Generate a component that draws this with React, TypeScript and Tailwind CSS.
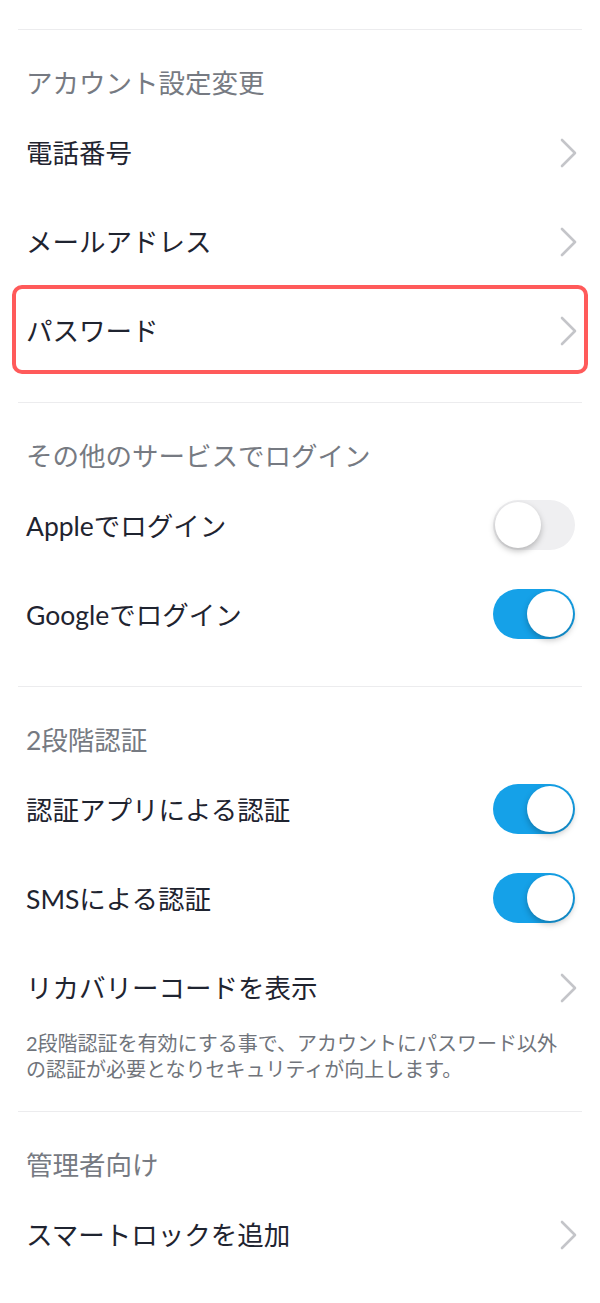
type Row =
  | { label: string; kind: "link"; highlight?: boolean }
  | { label: string; kind: "toggle"; on: boolean };

const Chevron = () => (
  <svg width="18" height="30" viewBox="0 0 18 30" fill="none" className="text-[#c4c5c9]">
    <polyline points="2,2 15,15 2,28" stroke="currentColor" strokeWidth="2.6" strokeLinecap="round" strokeLinejoin="round" />
  </svg>
);

const Toggle = ({ on }: { on: boolean }) => (
  <div
    className={`relative w-[82px] h-[50px] rounded-full ${on ? "bg-[#15a1e8]" : "bg-[#efeff1]"}`}
  >
    <div
      className={`absolute top-[2px] w-[46px] h-[46px] rounded-full bg-white shadow-[0_3px_6px_rgba(0,0,0,0.25)] ${
        on ? "right-[2px]" : "left-[2px]"
      }`}
    />
  </div>
);

const SettingRow = ({ row }: { row: Row }) => (
  <div className="relative h-[89px] flex items-center justify-between pl-2 pr-[4px]">
    <span className="text-[26.5px] leading-9 text-[#1f2430]">{row.label}</span>
    {row.kind === "link" ? (
      <Chevron />
    ) : (
      <div className="mr-[3px] -mt-[1px]">
        <Toggle on={row.on} />
      </div>
    )}
    {row.kind === "link" && row.highlight && (
      <span className="absolute -top-[1px] bottom-[1px] -left-[6px] -right-[6px] border-4 border-[#ff5a5a] rounded-[10px] pointer-events-none" />
    )}
  </div>
);

const Section = ({ title, rows, note }: { title: string; rows: Row[]; note?: string }) => (
  <section className="border-t border-[#ececee] pt-[35px] pb-[27px]">
    <h2 className="pl-2 text-[26.5px] leading-9 text-[#767a82] font-normal mb-[7px]">{title}</h2>
    {rows.map((r) => (
      <SettingRow key={r.label} row={r} />
    ))}
    {note && (
      <p className="pl-2 pr-6 -mt-[2px] mb-[2px] text-[20px] leading-[26px] text-[#70747b]">{note}</p>
    )}
  </section>
);

export default function App() {
  return (
    <div
      className="min-h-screen bg-white pt-[29px] mx-[18px]"
      style={{ fontFamily: 'Lato, "Noto Sans CJK JP", sans-serif' }}
    >
      <Section
        title="アカウント設定変更"
        rows={[
          { label: "電話番号", kind: "link" },
          { label: "メールアドレス", kind: "link" },
          { label: "パスワード", kind: "link", highlight: true },
        ]}
      />
      <Section
        title="その他のサービスでログイン"
        rows={[
          { label: "Appleでログイン", kind: "toggle", on: false },
          { label: "Googleでログイン", kind: "toggle", on: true },
        ]}
      />
      <Section
        title="2段階認証"
        rows={[
          { label: "認証アプリによる認証", kind: "toggle", on: true },
          { label: "SMSによる認証", kind: "toggle", on: true },
          { label: "リカバリーコードを表示", kind: "link" },
        ]}
        note="2段階認証を有効にする事で、アカウントにパスワード以外の認証が必要となりセキュリティが向上します。"
      />
      <Section title="管理者向け" rows={[{ label: "スマートロックを追加", kind: "link" }]} />
    </div>
  );
}
